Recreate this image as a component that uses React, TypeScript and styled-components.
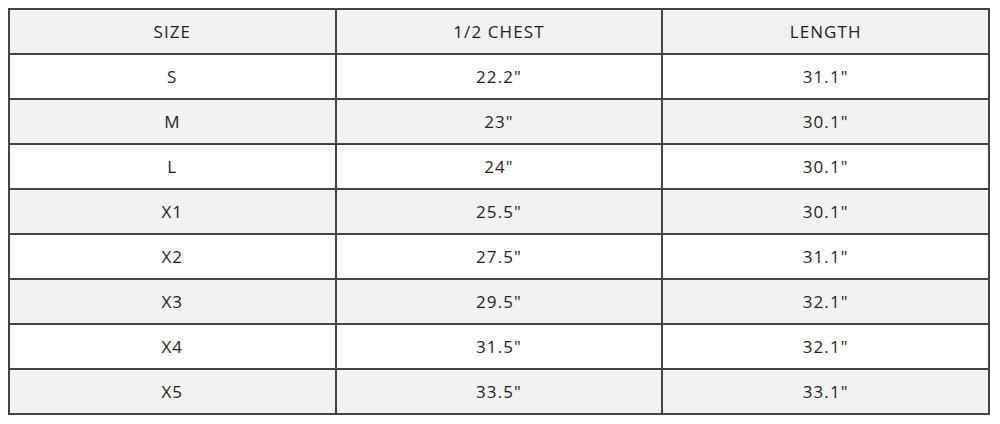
import React from "react";
import styled, { createGlobalStyle } from "styled-components";

const Global = createGlobalStyle`
  html, body { margin: 0; padding: 0; background: #ffffff; }
  body { font-family: "Open Sans", "Noto Sans", sans-serif; }
`;

const Page = styled.div`
  padding: 8px 10px 0 8px;
`;

const Table = styled.table`
  width: 982px;
  border-collapse: collapse;
  table-layout: fixed;
  color: #1f1f1f;
  font-family: "Open Sans", "Noto Sans", sans-serif;
  font-size: 17px;
  border: 2px solid #444444;
`;

const Row = styled.tr<{ $shade: boolean }>`
  background: ${(p) => (p.$shade ? "#f2f2f2" : "#ffffff")};
`;

const Cell = styled.td`
  border: 2px solid #444444;
  height: 43px;
  padding: 0;
  text-align: center;
  vertical-align: middle;
  letter-spacing: 1.1px;
`;

const HeadCell = styled(Cell).attrs({ as: "th" })`
  font-weight: 400;
`;

const rows: [string, string, string][] = [
  ["S", '22.2"', '31.1"'],
  ["M", '23"', '30.1"'],
  ["L", '24"', '30.1"'],
  ["X1", '25.5"', '30.1"'],
  ["X2", '27.5"', '31.1"'],
  ["X3", '29.5"', '32.1"'],
  ["X4", '31.5"', '32.1"'],
  ["X5", '33.5"', '33.1"'],
];

export default function App() {
  return (
    <>
      <Global />
      <Page>
        <Table>
          <thead>
            <Row $shade={true}>
              <HeadCell>SIZE</HeadCell>
              <HeadCell>1/2 CHEST</HeadCell>
              <HeadCell>LENGTH</HeadCell>
            </Row>
          </thead>
          <tbody>
            {rows.map((r, i) => (
              <Row key={r[0]} $shade={i % 2 === 1}>
                <Cell>{r[0]}</Cell>
                <Cell>{r[1]}</Cell>
                <Cell>{r[2]}</Cell>
              </Row>
            ))}
          </tbody>
        </Table>
      </Page>
    </>
  );
}
